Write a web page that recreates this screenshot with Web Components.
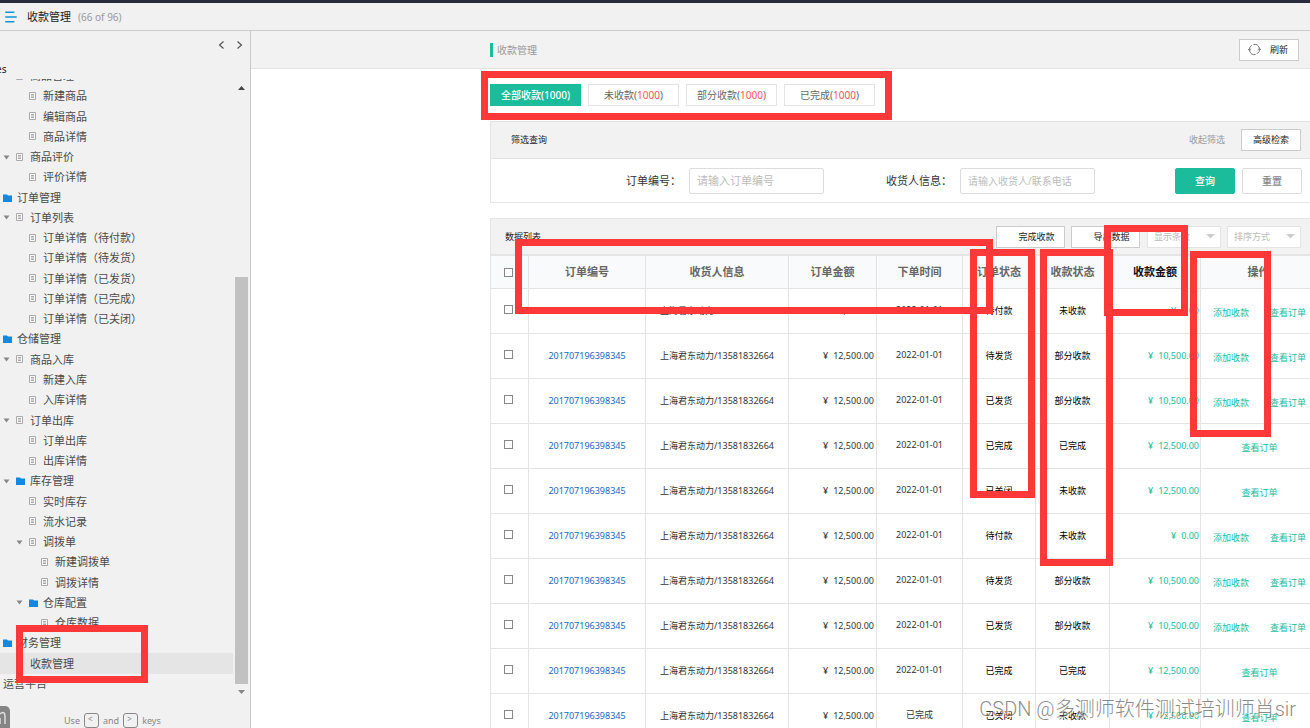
<!DOCTYPE html>
<html lang="zh-CN">
<head>
<meta charset="utf-8">
<title>收款管理</title>
<style>
  html, body { margin: 0; height: 100%; }
  body {
    overflow: hidden;
    background: #fff;
    color: #333;
    font: 9px/14px "Noto Sans", "Noto Sans CJK SC", sans-serif;
    --line: #e4e4e4;
    --green: #1abc9c;
    --bar: #f2f2f2;
  }
</style>
</head>
<body>
<proto-app></proto-app>

<script>
const define = (name, html, setup) => {
  const template = document.createElement('template');
  template.innerHTML = html;
  customElements.define(name, class extends HTMLElement {
    constructor() {
      super();
      this.attachShadow({ mode: 'open' }).append(template.content.cloneNode(true));
    }
    connectedCallback() {
      if (setup) setup(this, this.shadowRoot);
    }
  });
};

/* Top bar with the page name and counter */
define('top-bar', `
  <style>
    :host { display: flex; align-items: center; box-sizing: border-box; height: 31px;
      padding: 0 5px; border-top: 3px solid #272b3c; border-bottom: 1px solid #ccc; background: #f1f1f1; }
    svg { margin-right: 10px; }
    h1 { margin: 0; font-size: 11px; font-weight: 400; color: #222; }
    span { margin-left: 7px; font-size: 10px; color: #999; }
  </style>
  <svg width="12" height="12" viewBox="0 0 12 12" stroke="#0d94d2" stroke-width="1.5" stroke-linecap="round"><path d="M.8 1.2h8M.8 6h10.4M.8 10.8h8"/></svg>
  <h1>收款管理</h1><span>(66 of 96)</span>`);

/* One row of the page tree: level, kind (page, folder, plain), open, current */
define('nav-item', `
  <style>
    :host { display: flex; min-height: 0; }
    a { flex: 1; display: flex; align-items: center; padding-left: 3px;
      font-size: 11px; color: #4a4a4a; text-decoration: none; white-space: nowrap; }
    :host([level="2"]) a { padding-left: 16px; }
    :host([level="3"]) a { padding-left: 28px; }
    :host([current]) a { background: #e5e5e5; }
    .twist { display: flex; width: 13px; visibility: hidden; }
    :host([open]) .twist { visibility: visible; }
    :host([level="0"]) .twist { display: none; }
    .icon { display: flex; width: 9px; margin-right: 5px; }
    .folder { display: none; }
    :host([kind="folder"]) .folder { display: block; }
    :host([kind="folder"]) .page { display: none; }
    :host([kind="plain"]) .icon { display: none; }
  </style>
  <a href="#page">
    <span class="twist"><svg width="7" height="5"><path d="M.5 .5h6L3.5 4.5z" fill="#888"/></svg></span>
    <span class="icon">
      <svg class="page" width="8" height="9" viewBox="0 0 8 9"><path d="M.5.5h6v7h-6z" fill="#f8f8f8" stroke="#aaa"/><path d="M2 2.500h3M2 4h3M2 5.500h3" stroke="#aaa"/></svg>
      <svg class="folder" width="9" height="8" viewBox="0 0 9 8"><path d="M0 .5h4l1 1h4V8H0z" fill="#1288e0"/></svg>
    </span>
    <slot></slot>
  </a>`);

/* Sidebar */
const pages = [
  [1, 'page', '商品管理'], [2, 'page', '新建商品'], [2, 'page', '编辑商品'], [2, 'page', '商品详情'],
  [1, 'page', '商品评价', 'open'], [2, 'page', '评价详情'],
  [0, 'folder', '订单管理'], [1, 'page', '订单列表', 'open'],
  [2, 'page', '订单详情（待付款）'], [2, 'page', '订单详情（待发货）'], [2, 'page', '订单详情（已发货）'],
  [2, 'page', '订单详情（已完成）'], [2, 'page', '订单详情（已关闭）'],
  [0, 'folder', '仓储管理'], [1, 'page', '商品入库', 'open'], [2, 'page', '新建入库'], [2, 'page', '入库详情'],
  [1, 'page', '订单出库', 'open'], [2, 'page', '订单出库'], [2, 'page', '出库详情'],
  [1, 'folder', '库存管理', 'open'], [2, 'page', '实时库存'], [2, 'page', '流水记录'],
  [2, 'page', '调拨单', 'open'], [3, 'page', '新建调拨单'], [3, 'page', '调拨详情'],
  [2, 'folder', '仓库配置', 'open'], [3, 'page', '仓库数据'],
  [0, 'folder', '财务管理'], [1, 'page', '收款管理', 'current'], [0, 'plain', '运营平台']
];
define('side-nav', `
  <style>
    :host { display: flex; flex-direction: column; box-sizing: border-box; width: 251px;
      border-right: 1px solid #c8c8c8; background: #f1f1f1; overflow: hidden; }
    .arrows { display: flex; justify-content: flex-end; gap: 11px; padding: 9px 7px 0; }
    button { display: flex; padding: 0; border: 0; background: none; }
    .heading { margin-top: 12px; margin-left: -4px; height: 17px; font-size: 10px; line-height: 14px; color: #222; }
    .scroll { flex: 1; display: flex; min-height: 0; overflow: hidden; }
    .tree { flex: 1; display: grid; grid-auto-rows: 1fr; margin-top: -13px; padding-bottom: 7px; }
    .track { display: flex; flex-direction: column; align-items: center; justify-content: space-between;
      width: 13px; margin: 0 2px; padding: 7px 0; }
    .thumb { width: 13px; flex: 0 0 67%; margin-top: auto; margin-bottom: 6px; background: #c1c1c1; }
    footer { display: flex; align-items: flex-end; height: 27px; font-size: 9px; color: #888; }
    .badge { display: flex; margin-right: 54px; }
    .hint { display: flex; align-items: center; gap: 4px; }
    kbd { box-sizing: border-box; width: 15px; height: 15px; padding-left: 3px; border: 1px solid #888; border-radius: 3px;
      font: 8px/10px "Noto Sans", sans-serif; }
  </style>
  <div class="arrows">
    <button aria-label="上一页"><svg width="7" height="10" fill="none" stroke="#555" stroke-width="1.2"><path d="M5.500 1.500L1.500 5l4 3.500"/></svg></button>
    <button aria-label="下一页"><svg width="7" height="10" fill="none" stroke="#555" stroke-width="1.2"><path d="M1.500 1.500L5.500 5l-4 3.500"/></svg></button>
  </div>
  <div class="heading">es</div>
  <div class="scroll">
    <nav class="tree"></nav>
    <div class="track">
      <svg width="7" height="4"><path d="M0 4h7L3.500 0z" fill="#444"/></svg>
      <div class="thumb"></div>
      <svg width="7" height="4"><path d="M0 0h7L3.500 4z" fill="#888"/></svg>
    </div>
  </div>
  <footer>
    <svg class="badge" width="10" height="22"><path d="M0 0h5a5 5 0 0 1 5 5v17H0z" fill="#858585"/><path d="M0 8c4-3 5-1 5 3v7M0 12v6" fill="none" stroke="#ddd" stroke-width="1.500"/></svg>
    <div class="hint">Use <kbd>&lt;</kbd> and <kbd>&gt;</kbd> keys</div>
  </footer>`,
(host, root) => {
  const tree = root.querySelector('.tree');
  for (const [level, kind, text, flag] of pages) {
    const item = document.createElement('nav-item');
    item.setAttribute('level', level);
    item.setAttribute('kind', kind);
    if (flag) item.setAttribute(flag, '');
    item.textContent = text;
    tree.append(item);
  }
});

/* Title band of the content */
define('page-title', `
  <style>
    :host { display: flex; align-items: center; justify-content: space-between; box-sizing: border-box;
      height: 38px; padding: 0 11px 0 239px; border-bottom: 1px solid var(--line); background: var(--bar); }
    h2 { margin: 0; padding-left: 4px; border-left: 3px solid var(--green); font-size: 10px; line-height: 14px; font-weight: 400; color: #999; }
    button { display: flex; align-items: center; gap: 9px; box-sizing: border-box; width: 60px; height: 22px; padding: 0 8px;
      border: 1px solid #ccc; background: #fff; color: #222; font: inherit; }
  </style>
  <h2><slot></slot></h2>
  <button><svg width="13" height="13" viewBox="0 0 13 13" fill="none" stroke="#777"><path d="M1.500 7.500A5 5 0 0 1 4 2.200M5.500 1.500A5 5 0 0 1 11.300 5M11.500 5.500A5 5 0 0 1 9 10.800M7.500 11.500A5 5 0 0 1 1.700 8"/><path d="M0 6l1.500 1.800L3.200 6.200M9.800 6.800l1.700-1.600L13 7"/></svg>刷新</button>`);

/* Status tabs */
define('status-tabs', `
  <style>
    :host { display: flex; gap: 7px; padding: 15px 0; }
    button { box-sizing: border-box; width: 91px; height: 22px; padding: 0; border: 1px solid var(--line);
      background: #fff; color: #666; font: 10px/18px "Noto Sans", "Noto Sans CJK SC", sans-serif; }
    b { font-weight: 400; color: #f55; }
    .on { border-color: var(--green); background: var(--green); color: #fff; font-weight: 500; }
  </style>
  <button class="on">全部收款(1000)</button><button>未收款(<b>1000</b>)</button><button>部分收款(<b>1000</b>)</button><button>已完成(<b>1000</b>)</button>`);

/* Search panel */
define('filter-panel', `
  <style>
    :host { display: block; border: 1px solid var(--line); border-right: 0; }
    header { display: flex; align-items: center; height: 36px; padding: 0 9px 0 20px; background: var(--bar); border-bottom: 1px solid var(--line); color: #222; }
    header a { margin: 0 16px 0 auto; color: #999; text-decoration: none; }
    button { box-sizing: border-box; width: 60px; height: 22px; padding: 0; border: 1px solid #ccc; background: #fff; color: #222; font: inherit; }
    form { display: flex; align-items: center; height: 43px; padding: 0 8px 0 135px; }
    label { font-size: 11px; }
    label + input { margin-left: 8px; }
    input { box-sizing: border-box; width: 135px; height: 26px; margin: 0; padding: 0 7px; border: 1px solid #ddd; border-radius: 2px;
      font: 11px/16px "Noto Sans", "Noto Sans CJK SC", sans-serif; }
    #who { font-size: 10px; }
    input::placeholder { color: #bbb; }
    .second { margin-left: 62px; }
    form button { height: 26px; border-color: #ddd; border-radius: 2px; font-size: 10px; color: #888; font-weight: 500; }
    form .go { margin: 0 7px 0 auto; border-color: var(--green); background: var(--green); color: #fff; }
  </style>
  <header><span>筛选查询</span><a href="#fold">收起筛选</a><button>高级检索</button></header>
  <form>
    <label for="order">订单编号：</label><input id="order" placeholder="请输入订单编号">
    <label for="who" class="second">收货人信息：</label><input id="who" placeholder="请输入收货人/联系电话">
    <button type="button" class="go">查询</button><button type="reset">重置</button>
  </form>`);

/* Bar above the table */
define('list-toolbar', `
  <style>
    :host { display: flex; align-items: center; box-sizing: border-box; height: 38px; padding: 0 9px 0 14px;
      border: 1px solid var(--line); border-width: 1px 0 2px 1px; background: var(--bar); color: #222; }
    button, select { box-sizing: border-box; height: 22px; border: 1px solid #ccc; border-radius: 0; background: #fff; color: #222; font: inherit; }
    button { width: 69px; margin-right: 6px; padding: 0 0 0 12px; }
    button:first-of-type { margin-left: auto; }
    .pick { position: relative; display: flex; margin-left: 1px; }
    .pick + .pick { margin-left: 6px; }
    select { width: 74px; padding: 0 6px; appearance: none; border-color: var(--line); color: #bbb; }
    svg { position: absolute; right: 6px; top: 8px; pointer-events: none; }
  </style>
  <span>数据列表</span>
  <button>完成收款</button><button>导出数据</button>
  <div class="pick"><select aria-label="显示条数"><option>显示条数</option></select><svg width="9" height="5"><path d="M0 0h9L4.500 4.500z" fill="#ccc"/></svg></div>
  <div class="pick"><select aria-label="排序方式"><option>排序方式</option></select><svg width="9" height="5"><path d="M0 0h9L4.500 4.500z" fill="#ccc"/></svg></div>`);

/* Orders table */
const orders = [
  ['待付款', '未收款', '0.00'], ['待发货', '部分收款', '10,500.00'], ['已发货', '部分收款', '10,500.00'],
  ['已完成', '已完成', '12,500.00'], ['已关闭', '未收款', '12,500.00'], ['待付款', '未收款', '0.00'],
  ['待发货', '部分收款', '10,500.00'], ['已发货', '部分收款', '10,500.00'], ['已完成', '已完成', '12,500.00'],
  ['已关闭', '未收款', '12,500.00', '已完成']
];
define('orders-table', `
  <style>
    :host { display: block; }
    table { width: 100%; table-layout: fixed; border-spacing: 0; border-left: 1px solid var(--line); }
    th, td { box-sizing: border-box; padding: 0; border: 1px solid var(--line); border-width: 0 1px 1px 0; text-align: center; white-space: nowrap; }
    th { height: 33px; background: #f8fafc; font-size: 11px; font-weight: 700; color: #666; }
    th:nth-child(8) { color: #111; }
    td { height: 45px; }
    th:last-child { border-right: 0; padding-left: 6px; }
    td:last-child { border-right: 0; padding-left: 12px; }
    td:nth-child(4), td:nth-child(8) { padding-right: 2px; text-align: right; }
    td:nth-child(5) { padding-bottom: 2px; }
    td:nth-child(6), td:nth-child(7) { color: #000; }
    td:nth-child(8) { padding-right: 1px; color: var(--green); }
    input { appearance: none; display: block; box-sizing: border-box; width: 9px; height: 9px; margin: 0 0 0 13px; border: 1px solid #888; background: #fff; }
    td input { margin-bottom: 3px; }
    a { color: #1a66c0; text-decoration: none; }
    .acts { display: flex; justify-content: space-between; padding: 4px 4px 0 0; }
    .acts a { color: var(--green); }
    .acts a:only-child { margin: 0 auto; }
    .yen { margin-right: 5px; }
  </style>
  <table>
    <colgroup><col style="width:38px"><col style="width:117px"><col style="width:143px"><col style="width:88px"><col style="width:86px"><col style="width:73px"><col style="width:74px"><col style="width:91px"><col></colgroup>
    <thead><tr><th><input type="checkbox" aria-label="全选"></th><th>订单编号</th><th>收货人信息</th><th>订单金额</th><th>下单时间</th><th>订单状态</th><th>收款状态</th><th>收款金额</th><th>操作</th></tr></thead>
    <tbody></tbody>
  </table>`,
(host, root) => {
  root.querySelector('tbody').innerHTML = orders.map(([state, paid, sum, date = '2022-01-01']) => `
    <tr><td><input type="checkbox" aria-label="选择订单"></td>
    <td><a href="#order">201707196398345</a></td>
    <td>上海君东动力/13581832664</td>
    <td><span class="yen">¥</span>12,500.00</td>
    <td>${date}</td><td>${state}</td><td>${paid}</td>
    <td><span class="yen">¥</span>${sum}</td>
    <td><div class="acts">${sum === '12,500.00' ? '' : '<a href="#add">添加收款</a>'}<a href="#view">查看订单</a></div></td></tr>`).join('');
});

/* Red frame drawn over the page; box = left top width height */
define('red-frame', `
  <style>
    :host { position: absolute; box-sizing: border-box; border: 7px solid #fd3838; pointer-events: none; }
  </style>`,
(host) => {
  const [x, y, w, h] = host.getAttribute('box').split(' ');
  Object.assign(host.style, { left: x + 'px', top: y + 'px', width: w + 'px', height: h + 'px' });
});

define('proto-app', `
  <style>
    :host { position: relative; display: flex; flex-direction: column; height: 100vh; overflow: hidden; }
    .body { flex: 1; display: flex; min-height: 0; }
    side-nav { flex: none; }
    main { flex: 1; min-width: 0; overflow: hidden; }
    .content { padding-left: 239px; }
    list-toolbar { margin-top: 15px; }
    .mark { position: absolute; right: 14px; bottom: 5px; font: 20px/28px Roboto, "Noto Sans CJK SC", sans-serif; font-weight: 300;
      color: rgba(100,100,100,.75); text-shadow: 1px 1px 0 rgba(255,255,255,.8); white-space: nowrap; }
  </style>
  <top-bar></top-bar>
  <div class="body">
    <side-nav></side-nav>
    <main>
      <page-title>收款管理</page-title>
      <div class="content">
        <status-tabs></status-tabs>
        <filter-panel></filter-panel>
        <list-toolbar></list-toolbar>
        <orders-table></orders-table>
      </div>
    </main>
  </div>
  <red-frame box="481 71 411 49"></red-frame>
  <red-frame box="515 239 478 75"></red-frame>
  <red-frame box="970 249 65 249"></red-frame>
  <red-frame box="1040 249 73 317"></red-frame>
  <red-frame box="1104 225 84 91"></red-frame>
  <red-frame box="1190 251 81 186"></red-frame>
  <red-frame box="16 625 132 58"></red-frame>
  <div class="mark">CSDN @多测师软件测试培训师肖sir</div>`);
</script>
</body>
</html>
